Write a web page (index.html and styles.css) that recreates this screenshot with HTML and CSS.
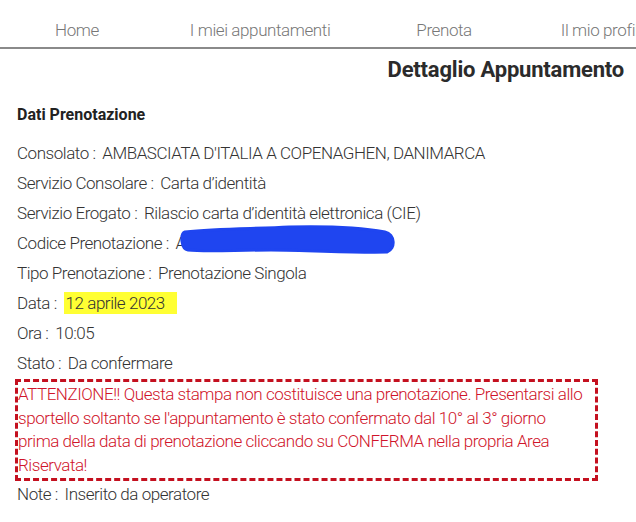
FILE: index.html
```html
<!DOCTYPE html>
<html lang="it">

<head>
    <meta charset="UTF-8">
    <meta name="viewport" content="width=device-width, initial-scale=1.0">
    <title>Dettaglio Appuntamento</title>
    <link rel="stylesheet" href="styles.css">
</head>

<body>
    <nav class="top-nav">
        <a href="#" class="nav-home">Home</a>
        <a href="#" class="nav-appts">I miei appuntamenti</a>
        <a href="#" class="nav-book">Prenota</a>
        <a href="#" class="nav-profile">Il mio profilo</a>
    </nav>

    <h1 class="page-title">Dettaglio Appuntamento</h1>

    <section class="details">
        <h2>Dati Prenotazione</h2>
        <div class="row"><span class="label">Consolato :</span> AMBASCIATA D'ITALIA A COPENAGHEN, DANIMARCA</div>
        <div class="row"><span class="label">Servizio Consolare :</span> Carta d’identità</div>
        <div class="row"><span class="label">Servizio Erogato :</span> Rilascio carta d’identità elettronica (CIE)</div>
        <div class="row"><span class="label">Codice Prenotazione :</span> <span class="redacted">A
            <svg class="scribble" width="220" height="34" viewBox="0 0 220 34">
                <path d="M6 9 C 40 5, 80 6, 110 4 C 150 3, 184 5, 206 9 C 216 11, 217 26, 208 29 C 176 30, 130 27, 92 27 C 56 27, 26 29, 9 27 C 2 26, 1 11, 6 9 Z" fill="#1f45f0" stroke="#1f45f0" stroke-width="3" stroke-linejoin="round"/>
            </svg></span></div>
        <div class="row"><span class="label">Tipo Prenotazione :</span> Prenotazione Singola</div>
        <div class="row"><span class="label">Data :</span> <span class="highlight">12 aprile 2023</span></div>
        <div class="row"><span class="label">Ora :</span> 10:05</div>
        <div class="row"><span class="label">Stato :</span> Da confermare</div>
        <div class="warning">
            ATTENZIONE!! Questa stampa non costituisce una prenotazione. Presentarsi allo sportello soltanto se l'appuntamento è stato confermato dal 10° al 3° giorno prima della data di prenotazione cliccando su CONFERMA nella propria Area Riservata!
        </div>
        <div class="row note"><span class="label">Note :</span> Inserito da operatore</div>
    </section>
</body>

</html>
```

FILE: styles.css
```css
body {
    font-family: 'Roboto', 'Liberation Sans', sans-serif;
    font-weight: 300;
    margin: 0;
    padding: 0;
    background: #fff;
    color: #333;
    overflow: hidden;
    width: 636px;
}

.top-nav {
    display: flex;
    height: 35px;
    padding-top: 12px;
    align-items: center;
    border-bottom: 2px solid #8a8a8a;
    white-space: nowrap;
    overflow: hidden;
}

.top-nav a {
    color: #777;
    text-decoration: none;
    font-size: 17px;
    letter-spacing: -0.4px;
}

.nav-home {
    margin-left: 55px;
}

.nav-appts {
    margin-left: 91px;
}

.nav-book {
    margin-left: 86px;
}

.nav-profile {
    margin-left: 89px;
}

.page-title {
    margin: 8px 12px 0 0;
    text-align: right;
    font-size: 22px;
    font-weight: 700;
    color: #2b2b2b;
    letter-spacing: -0.2px;
}

.details {
    padding: 0 17px;
}

.details h2 {
    margin: 23px 0 14px;
    font-size: 16px;
    font-weight: 700;
    color: #222;
}

.row {
    font-size: 17px;
    line-height: 30px;
    color: #333;
    white-space: nowrap;
    letter-spacing: -0.45px;
}

.label {
    margin-right: 3px;
}

.redacted {
    position: relative;
}

.scribble {
    position: absolute;
    left: 3px;
    top: -10px;
}

.highlight {
    background: #ffff33;
    padding: 1px 12px 1px 2px;
}

.warning {
    margin: 1px 21px 0 -2px;
    padding: 1px 6px 1px 0;
    border: 3px dashed #c4101f;
    color: #d0142a;
    font-size: 17px;
    line-height: 23.5px;
    letter-spacing: -0.45px;
}

.note {
    line-height: 26px;
}
```
